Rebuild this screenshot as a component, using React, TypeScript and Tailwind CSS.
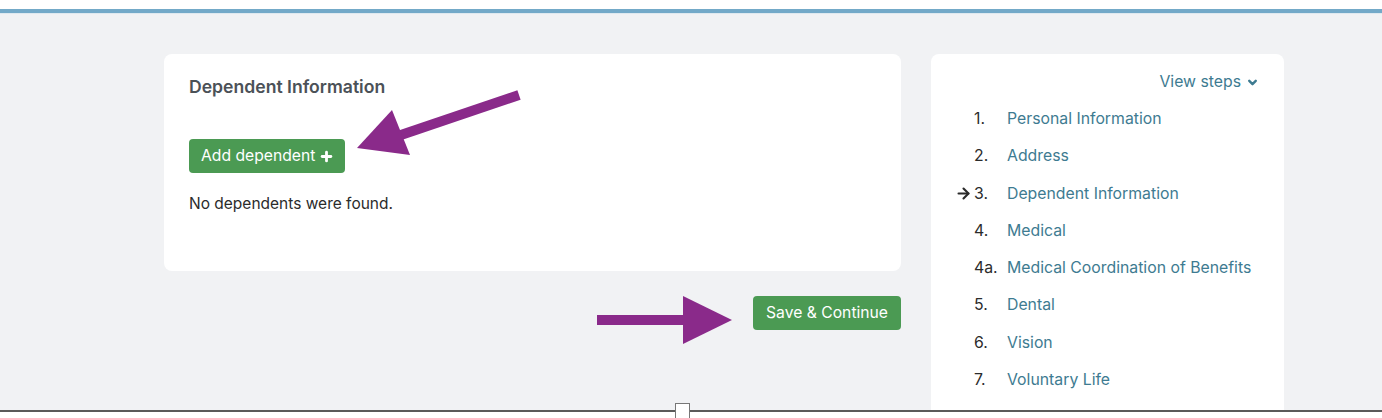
import { ChevronDown, ArrowRight, Plus } from 'lucide-react';

const steps = [
  { n: '1.', label: 'Personal Information' },
  { n: '2.', label: 'Address' },
  { n: '3.', label: 'Dependent Information', current: true },
  { n: '4.', label: 'Medical' },
  { n: '4a.', label: 'Medical Coordination of Benefits' },
  { n: '5.', label: 'Dental' },
  { n: '6.', label: 'Vision' },
  { n: '7.', label: 'Voluntary Life' },
];

// Purple annotation arrows drawn over the page.
function Annotations() {
  return (
    <svg className="pointer-events-none absolute left-0 top-0" width="1382" height="418">
      <line x1="519" y1="95" x2="395" y2="137" stroke="#8a2a8a" strokeWidth="10" />
      <polygon points="357,148 392,110 410,155" fill="#8a2a8a" />
      <rect x="597" y="315" width="90" height="10" fill="#8a2a8a" />
      <polygon points="683,296 732,320 683,344" fill="#8a2a8a" />
    </svg>
  );
}

export default function App() {
  return (
    <div
      className="relative h-[418px] w-[1382px] overflow-hidden bg-[#f1f2f4]"
      style={{ fontFamily: 'Inter, "Noto Sans", sans-serif' }}
    >
      <div className="h-[9px] bg-white" />
      <div className="h-[4px] bg-[#73a9c8]" />
      <div className="h-[1px] bg-[#dfe9ef]" />

      <div className="flex gap-[30px] pl-[164px] pt-[40px]">
        <div className="flex w-[737px] flex-col">
          <div className="h-[217px] rounded-lg bg-white px-[25px] pt-[22px]">
            <h2 className="text-[17.6px] font-semibold leading-[22px] text-[#4b5157]">Dependent Information</h2>
            <button
              type="button"
              className="mt-[41px] flex h-[34px] items-center gap-[4px] rounded-[4px] bg-[#4b9a53] pl-[12px] pr-[11px] text-[15.7px] text-white"
            >
              Add dependent
              <Plus size={15} strokeWidth={4.5} />
            </button>
            <p className="mt-[20px] text-[15.5px] leading-[22px] text-[#2b2b2b]">No dependents were found.</p>
          </div>
          <div className="mt-[25px] flex justify-end">
            <button
              type="button"
              className="h-[34px] rounded-[4px] bg-[#4b9a53] px-[13px] text-[15.7px] text-white"
            >
              Save &amp; Continue
            </button>
          </div>
        </div>

        <div className="h-[400px] w-[353px] rounded-lg bg-white pl-[24px] pr-[25px] pt-[17px]">
          <div className="flex items-center justify-end gap-[5px] text-[15.8px] leading-[22px] text-[#3e7b91]">
            View steps
            <ChevronDown size={13} strokeWidth={4.5} />
          </div>
          <ol className="mt-[15px] flex flex-col gap-[15.3px]">
            {steps.map((s) => (
              <li key={s.n} className="flex h-[22px] items-center text-[15.8px] leading-[22px]">
                <span className="w-[19px]">
                  {s.current && <ArrowRight size={17} strokeWidth={3} className="text-[#2b2b2b]" />}
                </span>
                <span className="w-[33px] text-[#2b2b2b]">{s.n}</span>
                <span className="text-[#3e7b91]">{s.label}</span>
              </li>
            ))}
          </ol>
        </div>
      </div>

      <div className="absolute bottom-0 left-0 h-[8px] w-full border-t-2 border-[#5a5a5a] bg-white" />
      <div className="absolute bottom-0 left-[675px] h-[15px] w-[15px] border border-b-0 border-[#777] bg-white" />

      <Annotations />
    </div>
  );
}
